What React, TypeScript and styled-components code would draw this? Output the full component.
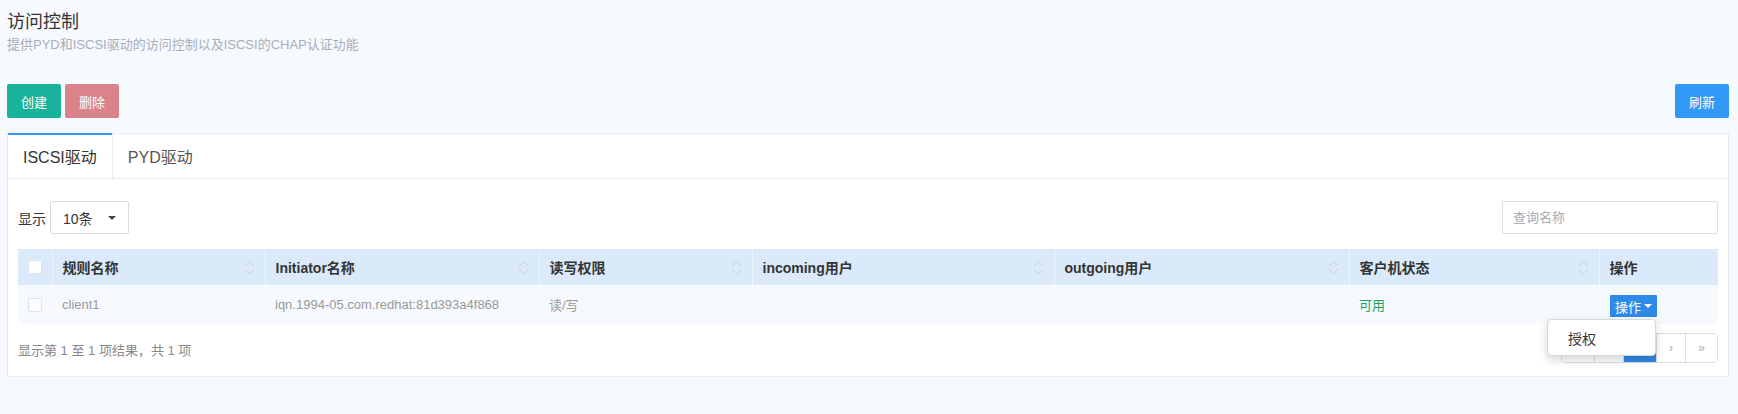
import React from "react";
import styled, { createGlobalStyle } from "styled-components";

const Global = createGlobalStyle`
  html, body { margin: 0; padding: 0; background: #f6faff; }
  body { font-family: "Liberation Sans", "Noto Sans CJK SC", sans-serif; color: #333; }
  * { box-sizing: border-box; }
`;

const Page = styled.div`
  padding: 10px 9px 0 7px;
  width: 1738px;
  height: 414px;
`;

const Title = styled.h1`
  margin: 0;
  font-size: 18px;
  font-weight: normal;
  line-height: 24px;
  color: #333;
`;

const Subtitle = styled.div`
  margin-top: 1px;
  font-size: 13px;
  line-height: 20px;
  color: #a7aeb8;
`;

const Toolbar = styled.div`
  margin-top: 29px;
  display: flex;
  align-items: center;
  gap: 4px;
`;

const Spacer = styled.div`
  flex: 1;
`;

const Button = styled.button<{ $bg: string }>`
  height: 34px;
  width: 54px;
  border: none;
  border-radius: 2px;
  background: ${(p) => p.$bg};
  color: #fff;
  font-family: inherit;
  font-size: 13px;
  padding: 0;
  cursor: pointer;
`;

const Panel = styled.div`
  margin-top: 15px;
  background: #fff;
  border: 1px solid #e6ecf2;
`;

const TabBar = styled.div`
  display: flex;
  height: 45px;
  border-bottom: 1px solid #e6ecf2;
`;

const Tab = styled.div<{ $active?: boolean }>`
  padding: 0 15px;
  display: flex;
  align-items: center;
  font-size: 16px;
  color: ${(p) => (p.$active ? "#333" : "#555")};
  border-right: 1px solid ${(p) => (p.$active ? "#e6ecf2" : "transparent")};
  box-shadow: ${(p) => (p.$active ? "inset 0 2px 0 #3b97f2" : "none")};
  margin-top: ${(p) => (p.$active ? "-1px" : "0")};
  height: ${(p) => (p.$active ? "45px" : "44px")};
  padding-top: ${(p) => (p.$active ? "1px" : "0")};
`;

const Body = styled.div`
  padding: 22px 10px 13px 10px;
`;

const Controls = styled.div`
  display: flex;
  align-items: center;
  justify-content: space-between;
  height: 33px;
`;

const LengthLabel = styled.label`
  display: flex;
  align-items: center;
  gap: 4px;
  font-size: 14px;
  color: #333;
`;

const Select = styled.div`
  width: 79px;
  height: 33px;
  border: 1px solid #d5dbe1;
  border-radius: 2px;
  display: flex;
  align-items: center;
  justify-content: space-between;
  padding: 0 12px 0 12px;
  font-size: 14px;
  color: #333;
`;

const Caret = styled.span<{ $color?: string; $size?: number }>`
  display: inline-block;
  width: 0;
  height: 0;
  border-left: ${(p) => p.$size ?? 4}px solid transparent;
  border-right: ${(p) => p.$size ?? 4}px solid transparent;
  border-top: ${(p) => p.$size ?? 4}px solid ${(p) => p.$color ?? "#444"};
`;

const Search = styled.input`
  width: 216px;
  height: 33px;
  border: 1px solid #d9e1ea;
  border-radius: 2px;
  padding: 0 10px;
  font-family: inherit;
  font-size: 13px;
  color: #333;
  outline: none;
  &::placeholder { color: #a6adb6; }
`;

const Table = styled.table`
  margin-top: 15px;
  width: 1700px;
  border-collapse: collapse;
  table-layout: fixed;
`;

const HeadCell = styled.th`
  height: 36px;
  padding: 0 10px;
  background: #dbeafb;
  text-align: left;
  font-size: 14px;
  font-weight: bold;
  color: #333;
  border-left: 1px solid #eef5fd;
  &:first-child { border-left: none; }
`;

const HeadInner = styled.div`
  display: flex;
  align-items: center;
  justify-content: space-between;
`;

const Row = styled.tr`
  background: #f6fafe;
`;

const Cell = styled.td<{ $color?: string }>`
  height: 39px;
  padding: 0 10px;
  font-size: 13px;
  color: ${(p) => p.$color ?? "#999"};
`;

const Check = styled.span`
  display: block;
  width: 14px;
  height: 14px;
  background: #fff;
  border: 1px solid #dde2e8;
  border-radius: 2px;
`;

const OpWrap = styled.div`
  position: relative;
  display: inline-block;
  margin-left: 1px;
  margin-top: 3px;
`;

const OpButton = styled.button`
  height: 22px;
  width: 47px;
  border: none;
  border-radius: 1px;
  background: #2d8ae6;
  color: #fff;
  font-family: inherit;
  font-size: 13px;
  padding: 0;
  display: flex;
  align-items: center;
  justify-content: center;
  gap: 3px;
`;

const Menu = styled.div`
  position: absolute;
  top: 24px;
  right: 1px;
  width: 109px;
  height: 37px;
  background: #fff;
  border: 1px solid #d4d8dd;
  border-radius: 4px;
  box-shadow: 0 4px 10px rgba(0, 0, 0, 0.16);
  display: flex;
  align-items: center;
  padding-left: 20px;
  font-size: 14px;
  color: #333;
  z-index: 5;
`;

const Footer = styled.div`
  margin-top: 9px;
  display: flex;
  align-items: center;
  justify-content: space-between;
  height: 30px;
`;

const Info = styled.div`
  font-size: 13px;
  color: #888;
  padding-top: 3px;
`;

const Pager = styled.div`
  display: flex;
  border: 1px solid #dcdfe3;
  border-radius: 4px;
  overflow: hidden;
  height: 30px;
`;

const PageBtn = styled.div<{ $w: number; $active?: boolean }>`
  width: ${(p) => p.$w}px;
  height: 100%;
  display: flex;
  align-items: center;
  justify-content: center;
  font-size: 12px;
  color: ${(p) => (p.$active ? "#fff" : "#aaa")};
  background: ${(p) => (p.$active ? "#2d8ae6" : "#fff")};
  border-left: 1px solid #dcdfe3;
  &:first-child { border-left: none; }
`;

const SortIcon = () => (
  <svg width="11" height="15" viewBox="0 0 11 15" style={{ flex: "none" }}>
    <path d="M1 6 L5.5 1.5 L10 6" fill="none" stroke="#c9cfd6" strokeWidth="1" />
    <path d="M1 9 L5.5 13.5 L10 9" fill="none" stroke="#c9cfd6" strokeWidth="1" />
  </svg>
);

const cols = [
  { w: 34, label: "", sort: false },
  { w: 213, label: "规则名称", sort: true },
  { w: 274, label: "Initiator名称", sort: true },
  { w: 213, label: "读写权限", sort: true },
  { w: 302, label: "incoming用户", sort: true },
  { w: 295, label: "outgoing用户", sort: true },
  { w: 250, label: "客户机状态", sort: true },
  { w: 119, label: "操作", sort: false },
];

export default function App() {
  return (
    <>
      <Global />
      <Page>
        <Title>访问控制</Title>
        <Subtitle>提供PYD和ISCSI驱动的访问控制以及ISCSI的CHAP认证功能</Subtitle>
        <Toolbar>
          <Button $bg="#19b39c">创建</Button>
          <Button $bg="#d9838b">删除</Button>
          <Spacer />
          <Button $bg="#3399f7">刷新</Button>
        </Toolbar>
        <Panel>
          <TabBar>
            <Tab $active>ISCSI驱动</Tab>
            <Tab>PYD驱动</Tab>
          </TabBar>
          <Body>
            <Controls>
              <LengthLabel>
                显示
                <Select>
                  10条
                  <Caret />
                </Select>
              </LengthLabel>
              <Search placeholder="查询名称" />
            </Controls>
            <Table>
              <colgroup>
                {cols.map((c, i) => (
                  <col key={i} style={{ width: c.w }} />
                ))}
              </colgroup>
              <thead>
                <tr>
                  {cols.map((c, i) => (
                    <HeadCell key={i}>
                      {i === 0 ? (
                        <Check />
                      ) : (
                        <HeadInner>
                          <span>{c.label}</span>
                          {c.sort && <SortIcon />}
                        </HeadInner>
                      )}
                    </HeadCell>
                  ))}
                </tr>
              </thead>
              <tbody>
                <Row>
                  <Cell>
                    <Check />
                  </Cell>
                  <Cell>client1</Cell>
                  <Cell>iqn.1994-05.com.redhat:81d393a4f868</Cell>
                  <Cell>读/写</Cell>
                  <Cell />
                  <Cell />
                  <Cell $color="#17a263">可用</Cell>
                  <Cell>
                    <OpWrap>
                      <OpButton>
                        操作
                        <Caret $color="#fff" $size={4} />
                      </OpButton>
                      <Menu>授权</Menu>
                    </OpWrap>
                  </Cell>
                </Row>
              </tbody>
            </Table>
            <Footer>
              <Info>显示第 1 至 1 项结果，共 1 项</Info>
              <Pager>
                <PageBtn $w={32}>«</PageBtn>
                <PageBtn $w={29}>‹</PageBtn>
                <PageBtn $w={33} $active>1</PageBtn>
                <PageBtn $w={29}>›</PageBtn>
                <PageBtn $w={32}>»</PageBtn>
              </Pager>
            </Footer>
          </Body>
        </Panel>
      </Page>
    </>
  );
}
